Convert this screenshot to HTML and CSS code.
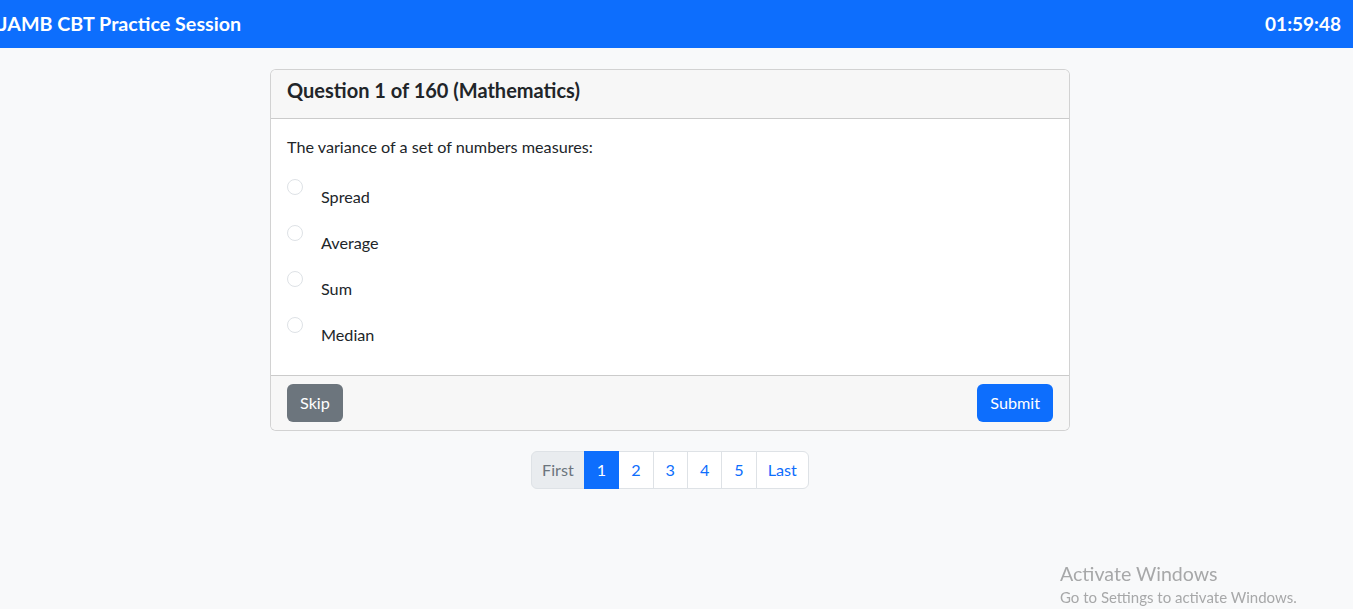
FILE: index.html
```html
<!DOCTYPE html>
<html lang="en">
<head>
<meta charset="utf-8">
<title>JAMB CBT Practice Session</title>
<link rel="stylesheet" href="styles.css">
</head>
<body>
<nav class="navbar">
  <span class="brand">JAMB CBT Practice Session</span>
  <span class="timer">01:59:48</span>
</nav>
<main class="container">
  <section class="card">
    <header class="card-header"><h5>Question 1 of 160 (Mathematics)</h5></header>
    <div class="card-body">
      <p class="question">The variance of a set of numbers measures:</p>
      <div class="option"><span class="radio"></span><label>Spread</label></div>
      <div class="option"><span class="radio"></span><label>Average</label></div>
      <div class="option"><span class="radio"></span><label>Sum</label></div>
      <div class="option"><span class="radio"></span><label>Median</label></div>
    </div>
    <footer class="card-footer">
      <button class="btn btn-secondary">Skip</button>
      <button class="btn btn-primary">Submit</button>
    </footer>
  </section>
  <ul class="pagination">
    <li class="page disabled">First</li>
    <li class="page active">1</li>
    <li class="page">2</li>
    <li class="page">3</li>
    <li class="page">4</li>
    <li class="page">5</li>
    <li class="page">Last</li>
  </ul>
</main>
<div class="watermark">
  <div class="wm-title">Activate Windows</div>
  <div class="wm-sub">Go to Settings to activate Windows.</div>
</div>
</body>
</html>
```
FILE: styles.css
```css
* { box-sizing: border-box; }
html, body { margin: 0; padding: 0; }
body {
  background: #f8f9fa;
  color: #212529;
  font-family: "Lato", "Noto Sans", sans-serif;
  font-size: 16.2px;
  line-height: 24px;
  height: 609px;
  overflow: hidden;
}
.navbar {
  background: #0d6efd;
  height: 48px;
  display: flex;
  align-items: center;
  justify-content: space-between;
  padding: 0 12px 0 0;
  color: #fff;
}
.brand { font-size: 19.7px; font-weight: 700; margin-left: -1px; }
.timer { font-size: 19px; font-weight: 700; }
.container { width: 800px; margin: 21px 0 0 270px; }
.card {
  background: #fff;
  border: 1px solid rgba(0,0,0,0.175);
  border-radius: 6px;
  overflow: hidden;
}
.card-header {
  background: #f7f7f7;
  padding: 8px 16px;
  border-bottom: 1px solid rgba(0,0,0,0.175);
}
.card-header h5 { margin: 0 0 8px; font-size: 20px; font-weight: 700; line-height: 24px; }
.card-body { padding: 16px; }
.question { margin: 0 0 16px; }
.option { display: flex; height: 38px; margin-bottom: 8px; }
.radio {
  width: 16px; height: 16px; margin-top: 4px;
  border: 1px solid #dee2e6; border-radius: 50%; background: #fff;
  flex: none;
}
.option label { margin-left: 18px; padding-top: 10px; }
.card-footer {
  background: #f7f7f7;
  border-top: 1px solid rgba(0,0,0,0.175);
  padding: 8px 16px;
  display: flex;
  justify-content: space-between;
}
.btn {
  font: inherit;
  border: 1px solid transparent;
  border-radius: 6px;
  padding: 6px 12px;
  line-height: 24px;
  color: #fff;
}
.btn-secondary { background: #6c757d; }
.btn-primary { background: #0d6efd; }
.pagination {
  list-style: none;
  margin: 20px 0 0;
  padding: 0;
  display: flex;
  justify-content: center;
}
.page {
  padding: 6px 12px;
  border: 1px solid #dee2e6;
  background: #fff;
  color: #0d6efd;
  margin-left: -1px;
}
.page:first-child { border-radius: 6px 0 0 6px; margin-left: 0; padding: 6px 10px; }
.page:last-child { border-radius: 0 6px 6px 0; padding: 6px 11px; }
.page.disabled { background: #e9ecef; color: #6c757d; }
.page.active { background: #0d6efd; border-color: #0d6efd; color: #fff; position: relative; }
.watermark {
  position: fixed;
  left: 1060px;
  top: 562px;
  color: #a7a8a9;
  white-space: nowrap;
}
.wm-title { font-size: 19.6px; line-height: 24px; font-weight: 400; }
.wm-sub { font-size: 15px; line-height: 20px; margin-top: 1px; }
```
